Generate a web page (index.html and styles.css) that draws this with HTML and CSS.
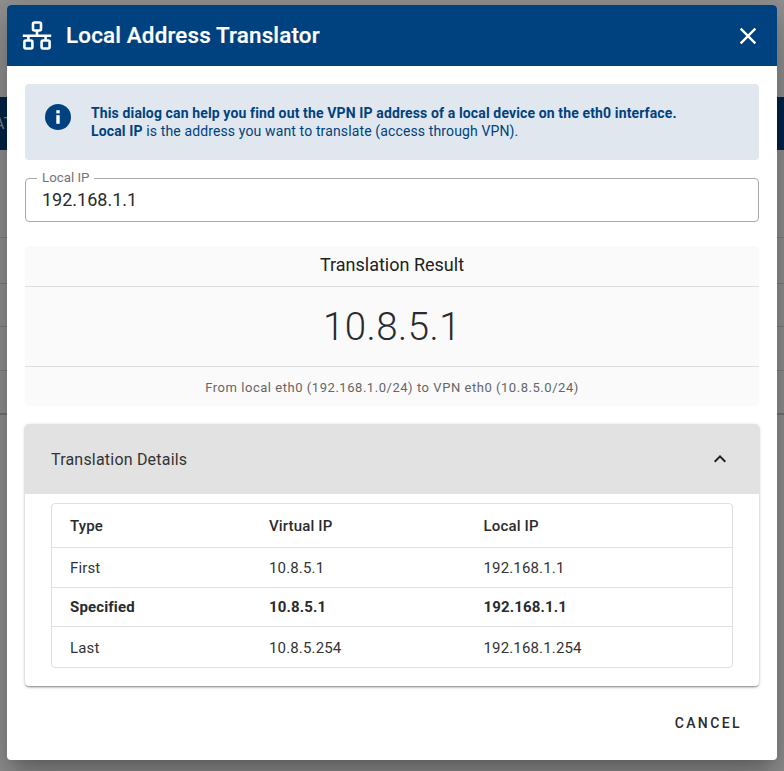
FILE: index.html
```html
<!DOCTYPE html>
<html lang="en">
<head>
<meta charset="utf-8">
<title>Local Address Translator</title>
<link rel="stylesheet" href="styles.css">
</head>
<body>
<div class="page">
  <div class="page-bar"><span class="page-bar-text">AT</span></div>
  <div class="page-rows">
    <div class="page-row r1"></div>
    <div class="page-row r2"></div>
    <div class="page-row r3"></div>
    <div class="page-row r4"></div>
    <div class="page-row r5"></div>
  </div>
</div>
<div class="scrim">
  <div class="dialog">
    <header class="dialog-head">
      <svg class="head-icon" viewBox="0 0 30 30" width="30" height="30" fill="none" stroke="#fff" stroke-width="2.6">
        <rect x="11" y="1.5" width="8" height="8" rx="1.5"/>
        <rect x="2.4" y="19.5" width="8" height="8" rx="1.5"/>
        <rect x="19.6" y="19.5" width="8" height="8" rx="1.5"/>
        <path d="M15 9.5v5.2M.8 14.7h28.4M6.4 14.7v4.8M23.6 14.7v4.8"/>
      </svg>
      <h1 class="dialog-title">Local Address Translator</h1>
      <svg class="close-icon" viewBox="0 0 24 24" width="28" height="28" fill="#fff"><path d="M19 6.41 17.59 5 12 10.59 6.41 5 5 6.41 10.59 12 5 17.59 6.41 19 12 13.41 17.59 19 19 17.59 13.41 12z"/></svg>
    </header>
    <div class="dialog-body">
      <div class="alert">
        <svg class="alert-icon" viewBox="0 0 26 26" width="26" height="26"><circle cx="13" cy="13" r="13" fill="#00427f"/><rect x="11.3" y="6.2" width="3.4" height="3.2" fill="#fff"/><rect x="11.3" y="11.2" width="3.4" height="8.6" fill="#fff"/></svg>
        <div class="alert-text">
          <div class="strong">This dialog can help you find out the VPN IP address of a local device on the eth0 interface.</div>
          <div><span class="strong">Local IP</span> is the address you want to translate (access through VPN).</div>
        </div>
      </div>
      <fieldset class="field">
        <legend class="field-label">Local IP</legend>
        <div class="field-value">192.168.1.1</div>
      </fieldset>
      <section class="result">
        <div class="result-title">Translation Result</div>
        <div class="result-value">10.8.5.1</div>
        <div class="result-note">From local eth0 (192.168.1.0/24) to VPN eth0 (10.8.5.0/24)</div>
      </section>
      <section class="details">
        <div class="details-head">
          <span class="details-title">Translation Details</span>
          <svg class="chevron" viewBox="0 0 24 24" width="24" height="24" fill="#212121"><path d="M12 8l-6 6 1.41 1.41L12 10.83l4.59 4.58L18 14z"/></svg>
        </div>
        <div class="details-body">
          <div class="table">
            <div class="row row-head"><span>Type</span><span>Virtual IP</span><span>Local IP</span></div>
            <div class="row row-first"><span>First</span><span>10.8.5.1</span><span>192.168.1.1</span></div>
            <div class="row row-bold"><span>Specified</span><span>10.8.5.1</span><span>192.168.1.1</span></div>
            <div class="row row-last"><span>Last</span><span>10.8.5.254</span><span>192.168.1.254</span></div>
          </div>
        </div>
      </section>
    </div>
    <footer class="dialog-foot"><button class="cancel" type="button">CANCEL</button></footer>
  </div>
</div>
</body>
</html>
```
FILE: styles.css
```css
* { box-sizing: border-box; }
html, body { margin: 0; height: 100%; overflow: hidden; }
body { background: #fff; font-family: Roboto, "Liberation Sans", sans-serif; color: #2b2b2b; }

.page { height: 771px; padding-top: 97px; }
.page-bar { height: 53px; background: #00427f; color: #dfe6ee; display: flex; align-items: center; font-size: 16px; margin-left: -6px; }
.page-bar-text { white-space: nowrap; }
.page-rows { margin-top: 87px; }
.page-row { border-top: 1px solid #ddd; height: 44px; }
.page-row.r1 { height: 46px; }
.page-row.r2 { height: 43px; }
.page-row.r4 { height: 43px; }
.page-row.r5 { border-top: 2px solid #ccc; }

.scrim { position: absolute; inset: 0; background: rgba(0,0,0,.43); display: flex; align-items: flex-start; justify-content: center; padding-top: 5px; }
.dialog { width: 770px; height: 755px; background: #fff; border-radius: 4px; overflow: hidden; box-shadow: 0 11px 15px -7px rgba(0,0,0,.2), 0 24px 38px 3px rgba(0,0,0,.14), 0 9px 46px 8px rgba(0,0,0,.12); display: flex; flex-direction: column; }

.dialog-head { height: 61px; background: #00427f; color: #fff; display: flex; align-items: center; padding: 0 15px 0 15px; flex: none; }
.head-icon { flex: none; }
.dialog-title { margin: 0 0 0 14px; font-size: 22.4px; letter-spacing: .0075em; font-weight: 500; line-height: 1.2; flex: 1; -webkit-text-stroke: .2px #fff; }
.close-icon { flex: none; }

.dialog-body { padding: 18px 18px 0; flex: 1; display: flex; flex-direction: column; }

.alert { height: 76px; background: #e0e7ef; border-radius: 4px; color: #00427f; display: flex; align-items: flex-start; padding: 20px 0 0 20px; font-size: 14px; line-height: 18px; letter-spacing: .13px; flex: none; }
.alert-icon { flex: none; margin-right: 20px; }
.strong { font-weight: 700; }

.field { margin: 11px 0 0; height: 51px; border: 1px solid #aaa; border-radius: 4px; padding: 0 16px; min-width: 0; flex: none; }
.field-label { font-size: 13.3px; line-height: 14px; color: #757575; padding: 0 5px; margin-left: -5px; height: 14px; }
.field-value { font-size: 18px; line-height: 24px; color: #2b2b2b; margin-top: 3px; }

.result { margin-top: 24px; height: 160px; background: #fafafa; border-radius: 4px; text-align: center; flex: none; }
.result-title { height: 41px; border-bottom: 1px solid #ddd; font-size: 18px; line-height: 38px; color: #212121; }
.result-value { height: 80px; border-bottom: 1px solid #ddd; font-size: 38.4px; font-weight: 300; letter-spacing: .5px; line-height: 80px; color: #2b2b2b; }
.result-note { font-size: 13px; line-height: 41px; letter-spacing: .54px; color: #666; }

.details { margin-top: 18px; height: 262px; border-radius: 4px; overflow: hidden; box-shadow: 0 2px 2px -1px rgba(0,0,0,.28), 0 1px 2px 0 rgba(0,0,0,.18), 0 1px 4px 0 rgba(0,0,0,.14); flex: none; }
.details-head { height: 70px; background: #e2e2e2; display: flex; align-items: center; justify-content: space-between; padding: 0 27px 0 26px; }
.details-title { font-size: 16px; letter-spacing: .2px; color: #333; }
.details-body { padding: 9px 26px 0; }
.table { border: 1px solid #e0e0e0; border-radius: 4px; font-size: 15px; letter-spacing: .15px; color: #333; }
.row { display: grid; grid-template-columns: 199px 214.5px 1fr; align-items: center; padding-left: 18px; border-bottom: 1px solid #e0e0e0; height: 40px; }
.row-head { height: 44px; font-weight: 500; color: #2b2b2b; }
.row-bold { font-weight: 700; height: 39px; color: #2b2b2b; }
.row-last { border-bottom: 0; padding-top: 1px; }

.dialog-foot { height: 74px; display: flex; justify-content: flex-end; align-items: center; padding: 0 35px 0 0; flex: none; }
.cancel { border: 0; background: none; padding: 0; font: 500 14px Roboto, sans-serif; letter-spacing: 2.4px; color: #2b2b2b; }
```
